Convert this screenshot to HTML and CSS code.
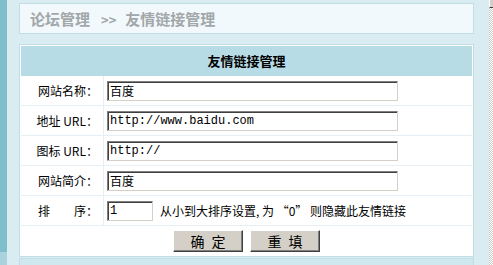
FILE: index.html
```html
<!DOCTYPE html>
<html lang="zh-CN">
<head>
    <meta charset="UTF-8">
    <title>友情链接管理</title>
    <link rel="stylesheet" href="styles.css">
</head>
<body>
    <div class="page">
        <div class="side"><div class="side-end"></div></div>
        <div class="main">
            <div class="crumb">论坛管理<span class="sep">&gt;&gt;</span>友情链接管理</div>
            <div class="panel">
                <div class="panel-title">友情链接管理</div>
                <form class="link-form" onsubmit="event.preventDefault();">
                    <div class="row">
                        <label class="label">网站名称：</label>
                        <div class="field"><input class="txt" type="text" value="百度"></div>
                    </div>
                    <div class="row">
                        <label class="label">地址 URL：</label>
                        <div class="field"><input class="txt" type="text" value="http://www.baidu.com"></div>
                    </div>
                    <div class="row">
                        <label class="label">图标 URL：</label>
                        <div class="field"><input class="txt" type="text" value="http://"></div>
                    </div>
                    <div class="row">
                        <label class="label">网站简介：</label>
                        <div class="field"><input class="txt" type="text" value="百度"></div>
                    </div>
                    <div class="row">
                        <label class="label">排　　序：</label>
                        <div class="field">
                            <input class="txt short" type="text" value="1">
                            <span class="hint">从小到大排序设置, 为 “0” 则隐藏此友情链接</span>
                        </div>
                    </div>
                    <div class="row buttons">
                        <button type="submit" class="btn">确 定</button>
                        <button type="reset" class="btn">重 填</button>
                    </div>
                </form>
            </div>
            <div class="panel next"></div>
        </div>
        <div class="scroll"><div class="scroll-btn"></div></div>
    </div>
</body>
</html>
```

FILE: styles.css
```css
body {
    margin: 0;
    padding: 0;
    font-family: "Noto Sans CJK SC", sans-serif;
    font-size: 12px;
    background-color: #d9ecf2;
    overflow: hidden;
}

.page {
    display: flex;
    height: 265px;
    overflow: hidden;
}

.side {
    width: 7px;
    background-color: #7fbecb;
    display: flex;
    flex-direction: column;
    justify-content: flex-end;
}

.side-end {
    height: 13px;
    background-color: #a9d2dc;
}

.main {
    flex: 1;
    padding: 3px 15px 0 12px;
    background-color: #d9ecf2;
    overflow: hidden;
}

.crumb {
    height: 29px;
    line-height: 29px;
    padding-left: 10px;
    border: 1px solid #c3dde5;
    background-color: #f2f9fc;
    color: #a2a7a9;
    font-size: 15px;
    font-weight: bold;
    margin-bottom: 10px;
}

.sep {
    margin: 0 9px 0 11px;
    font-size: 13px;
}

.panel {
    border: 1px solid #c3dde6;
    padding: 1px;
    background-color: #fff;
}

.panel-title {
    height: 30px;
    line-height: 30px;
    text-align: center;
    background-color: #b8dce6;
    font-size: 13px;
    font-weight: bold;
    color: #000;
}

.link-form {
    margin: 0;
}

.row {
    display: flex;
    align-items: center;
    height: 29px;
    border-bottom: 1px solid #e6eff3;
}

.label {
    width: 77px;
    height: 29px;
    line-height: 29px;
    padding-right: 5px;
    text-align: right;
    border-right: 1px solid #e6eff3;
    color: #000;
    white-space: nowrap;
}

.field {
    display: flex;
    align-items: center;
    padding-left: 3px;
}

.txt {
    box-sizing: border-box;
    width: 291px;
    height: 20px;
    margin: 0;
    padding: 1px 2px 0;
    border: 1px solid;
    border-color: #808080 #d4d0c8 #d4d0c8 #808080;
    box-shadow: inset 1px 1px 0 #404040;
    font-family: "Liberation Mono", "Noto Sans CJK SC", monospace;
    font-size: 12px;
    color: #000;
    background-color: #fff;
}

.short {
    width: 46px;
}

.hint {
    margin-left: 7px;
    color: #000;
    white-space: nowrap;
}

.buttons {
    justify-content: center;
    gap: 7px;
    border-bottom: none;
}

.btn {
    box-sizing: border-box;
    width: 70px;
    height: 22px;
    padding: 0;
    border: 1px solid;
    border-color: #fff #404040 #404040 #fff;
    box-shadow: inset -1px -1px 0 #808080;
    background-color: #d4d0c8;
    font-family: "Noto Sans CJK SC", sans-serif;
    font-size: 14px;
    line-height: 18px;
    word-spacing: 4px;
    color: #000;
    cursor: pointer;
}

.next {
    margin-top: 1px;
    height: 4px;
    background-color: #cfe7ee;
}

.scroll {
    width: 4px;
    background-color: #e6e3dd;
    background-image: repeating-conic-gradient(#ffffff 0 25%, #cfccc4 0 50%);
    background-size: 2px 2px;
}

.scroll-btn {
    height: 7px;
    background-color: #d4d0c8;
    border-left: 1px solid #fff;
    border-bottom: 1px solid #404040;
}
```
